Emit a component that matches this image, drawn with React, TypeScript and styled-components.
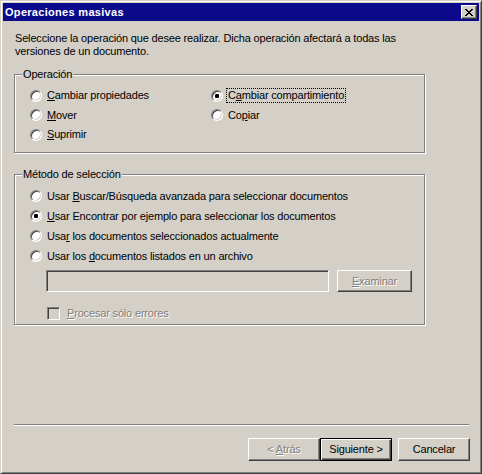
import * as React from 'react';
import styled, { createGlobalStyle, css } from 'styled-components';

const FACE = '#d4d0c8';
const SHADOW = '#808080';
const DARK = '#404040';

const GlobalStyle = createGlobalStyle`
	html, body {
		margin: 0;
		padding: 0;
		background: ${FACE};
	}
	body {
		font-family: "Liberation Sans", Arial, sans-serif;
		font-size: 11px;
		letter-spacing: -0.17px;
		color: #000;
	}
`;

const Window = styled.div`
	width: 482px;
	height: 474px;
	box-sizing: border-box;
	border: 1px solid;
	border-color: ${FACE} ${DARK} ${DARK} ${FACE};
	box-shadow: inset 1px 1px 0 #fff, inset -1px -1px 0 ${SHADOW};
	padding: 2px;
	background: ${FACE};
	display: flex;
	flex-direction: column;
`;

const TitleBar = styled.div`
	height: 18px;
	flex: none;
	background: #0a0a8a;
	display: flex;
	align-items: center;
	justify-content: space-between;
	padding: 0 2px;
	color: #fff;
	font-weight: bold;
	font-size: 11px;
	letter-spacing: 0.3px;
	line-height: 13px;
`;

const CloseButton = styled.div`
	width: 16px;
	height: 14px;
	box-sizing: border-box;
	border: 1px solid;
	border-color: #fff ${DARK} ${DARK} #fff;
	box-shadow: inset -1px -1px 0 ${SHADOW};
	background: ${FACE};
	display: flex;
	align-items: center;
	justify-content: center;
`;

const Body = styled.div`
	flex: 1;
	display: flex;
	flex-direction: column;
	padding: 11px 9px 10px 11px;
`;

const Description = styled.div`
	margin-left: 1px;
	line-height: 13px;
`;

const Group = styled.fieldset<{ $top: number }>`
	width: 411px;
	box-sizing: border-box;
	margin: ${p => p.$top}px 0 0 0;
	padding: 0;
	border: 1px solid ${SHADOW};
	box-shadow: 1px 1px 0 #fff, inset 1px 1px 0 #fff;
	min-width: 0;
`;

const Legend = styled.legend`
	margin-left: 7px;
	padding: 0 1px;
	line-height: 13px;
	background: ${FACE};
`;

const OperationGrid = styled.div`
	display: grid;
	grid-template-columns: 181px auto;
	row-gap: 4.5px;
	padding: 7px 0 9.5px 15px;
`;

const MethodBody = styled.div`
	display: flex;
	flex-direction: column;
	padding: 8px 0 3px 15px;
`;

const OptionList = styled.div`
	display: flex;
	flex-direction: column;
	gap: 5px;
`;

const Option = styled.label`
	display: flex;
	align-items: center;
	gap: 3px;
	height: 15px;
`;

const Radio = styled.span<{ $checked?: boolean }>`
	position: relative;
	width: 12px;
	height: 12px;
	box-sizing: border-box;
	border-radius: 50%;
	border: 1px solid;
	border-color: ${SHADOW} #fff #fff ${SHADOW};
	box-shadow: inset 1px 1px 0 ${DARK}, inset -1px -1px 0 ${FACE};
	background: #fff;
	flex: none;
	${p => p.$checked && css`
		&::after {
			content: '';
			position: absolute;
			left: 3px;
			top: 3px;
			width: 4px;
			height: 4px;
			border-radius: 1px;
			background: #000;
		}
	`}
`;

const OptionText = styled.span<{ $focus?: boolean; $disabled?: boolean }>`
	line-height: 13px;
	padding: 0 1px;
	border: 1px ${p => (p.$focus ? 'dotted #000' : 'solid transparent')};
	white-space: nowrap;
	${p => p.$disabled && css`
		color: ${SHADOW};
		text-shadow: 1px 1px 0 #fff;
	`}
`;

const FileRow = styled.div`
	display: flex;
	gap: 8px;
	margin: 6.5px 0 0 16px;
`;

const Field = styled.div`
	width: 283px;
	height: 22px;
	box-sizing: border-box;
	border: 1px solid;
	border-color: ${SHADOW} #fff #fff ${SHADOW};
	box-shadow: inset 1px 1px 0 ${DARK}, inset -1px -1px 0 ${FACE};
	background: ${FACE};
`;

const Button = styled.div<{ $default?: boolean; $disabled?: boolean; $width?: number; $height?: number }>`
	width: ${p => p.$width ?? 72}px;
	height: ${p => p.$height ?? 23}px;
	box-sizing: border-box;
	border: 1px solid;
	border-color: #fff ${DARK} ${DARK} #fff;
	box-shadow: inset -1px -1px 0 ${SHADOW};
	background: ${FACE};
	display: flex;
	align-items: center;
	justify-content: center;
	line-height: 13px;
	white-space: pre;
	${p => p.$default && css`
		border: 1px solid #000;
		box-shadow: inset 1px 1px 0 #fff, inset -1px -1px 0 ${DARK}, inset -2px -2px 0 ${SHADOW};
	`}
	${p => p.$disabled && css`
		color: ${SHADOW};
		text-shadow: 1px 1px 0 #fff;
	`}
`;

const CheckRow = styled.div`
	display: flex;
	align-items: center;
	gap: 5px;
	height: 15px;
	margin: 14px 0 0 17px;
`;

const CheckBox = styled.span`
	width: 13px;
	height: 13px;
	box-sizing: border-box;
	border: 1px solid;
	border-color: ${SHADOW} #fff #fff ${SHADOW};
	box-shadow: inset 1px 1px 0 ${DARK}, inset -1px -1px 0 ${FACE};
	background: ${FACE};
	flex: none;
`;

const Spacer = styled.div`
	flex: 1;
`;

const Separator = styled.div`
	height: 0;
	border-top: 1px solid ${SHADOW};
	border-bottom: 1px solid #fff;
	margin-right: 1px;
`;

const ButtonRow = styled.div`
	display: flex;
	justify-content: flex-end;
	margin-top: 12px;
`;

const ButtonGap = styled.div`
	width: 6px;
`;

const Key = styled.span`
	text-decoration: underline;
	text-underline-offset: 1px;
`;

const CloseGlyph = () => (
	<svg width="8" height="7" viewBox="0 0 8 7" shapeRendering="crispEdges">
		<path d="M0 0h2v1h-2zM6 0h2v1h-2zM1 1h2v1h-2zM5 1h2v1h-2zM2 2h4v1h-4zM3 3h2v1h-2zM2 4h4v1h-4zM1 5h2v1h-2zM5 5h2v1h-2zM0 6h2v1h-2zM6 6h2v1h-2z" fill="#000" />
	</svg>
);

const App = () => (
	<>
		<GlobalStyle />
		<Window>
			<TitleBar>
				<span>Operaciones masivas</span>
				<CloseButton><CloseGlyph /></CloseButton>
			</TitleBar>
			<Body>
				<Description>
					Seleccione la operación que desee realizar. Dicha operación afectará a todas las<br />
					versiones de un documento.
				</Description>
				<Group $top={10}>
					<Legend>Operación</Legend>
					<OperationGrid>
						<Option><Radio /><OptionText><Key>C</Key>ambiar propiedades</OptionText></Option>
						<Option><Radio $checked /><OptionText $focus>C<Key>a</Key>mbiar compartimiento</OptionText></Option>
						<Option><Radio /><OptionText><Key>M</Key>over</OptionText></Option>
						<Option><Radio /><OptionText>Co<Key>p</Key>iar</OptionText></Option>
						<Option><Radio /><OptionText><Key>S</Key>uprimir</OptionText></Option>
					</OperationGrid>
				</Group>
				<Group $top={15}>
					<Legend>Método de selección</Legend>
					<MethodBody>
						<OptionList>
							<Option><Radio /><OptionText>Usar <Key>B</Key>uscar/Búsqueda avanzada para seleccionar documentos</OptionText></Option>
							<Option><Radio $checked /><OptionText><Key>U</Key>sar Encontrar por ejemplo para seleccionar los documentos</OptionText></Option>
							<Option><Radio /><OptionText>Usa<Key>r</Key> los documentos seleccionados actualmente</OptionText></Option>
							<Option><Radio /><OptionText>Usar los <Key>d</Key>ocumentos listados en un archivo</OptionText></Option>
						</OptionList>
						<FileRow>
							<Field />
							<Button $disabled $width={75} $height={22}><span><Key>E</Key>xaminar</span></Button>
						</FileRow>
						<CheckRow>
							<CheckBox />
							<OptionText $disabled><Key>P</Key>rocesar sólo errores</OptionText>
						</CheckRow>
					</MethodBody>
				</Group>
				<Spacer />
				<Separator />
				<ButtonRow>
					<Button $disabled><span>&lt; <Key>A</Key>trás</span></Button>
					<Button $default><span>Siguiente &gt;</span></Button>
					<ButtonGap />
					<Button><span>Cancelar</span></Button>
				</ButtonRow>
			</Body>
		</Window>
	</>
);

export default App;
